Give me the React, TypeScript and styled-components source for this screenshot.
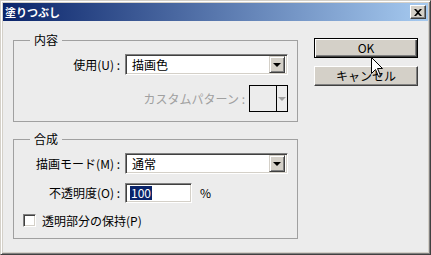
import styled, { createGlobalStyle } from "styled-components"

const Global = createGlobalStyle`
    html, body {
        margin: 0;
        padding: 0;
        background: #ececec;
    }
    body {
        font-family: "Noto Sans CJK JP", "Liberation Sans", sans-serif;
        font-size: 12px;
        color: #000;
    }
`

const Window = styled.div`
    position: relative;
    width: 431px;
    height: 255px;
    box-sizing: border-box;
    border: 1px solid;
    border-color: #d4d0c8 #404040 #404040 #d4d0c8;
    box-shadow: inset 1px 1px #fff, inset -1px -1px #808080;
    padding: 2px 2px 2px 2px;
    background: #d4d0c8;
    display: flex;
    flex-direction: column;
    overflow: hidden;
`

const TitleBar = styled.div`
    height: 18px;
    flex: none;
    display: flex;
    align-items: center;
    justify-content: space-between;
    padding: 0 2px 0 2px;
    background: linear-gradient(to right, #0a246a, #a6caf0);
`

const Title = styled.span`
    color: #fff;
    font-weight: bold;
    font-size: 11px;
    line-height: 14px;
`

const CloseButton = styled.div`
    width: 16px;
    height: 14px;
    box-sizing: border-box;
    background: #d4d0c8;
    border: 1px solid;
    border-color: #fff #404040 #404040 #fff;
    box-shadow: inset -1px -1px #808080;
    display: flex;
    align-items: center;
    justify-content: center;
`

const Body = styled.div`
    flex: 1;
    display: flex;
    align-items: flex-start;
    padding: 12px 10px 0 10px;
    background: #ececec;
`

const LeftColumn = styled.div`
    width: 285px;
    display: flex;
    flex-direction: column;
    gap: 10px;
`

const Group = styled.fieldset`
    margin: 0;
    padding: 7px 9px 9px 0;
    border: 1px solid #a0a0a0;
    min-inline-size: 0;
    display: flex;
    flex-direction: column;
    gap: ${(p: { $gap: number }) => p.$gap}px;
`

const Legend = styled.legend`
    margin-left: 16px;
    padding: 0 4px;
    line-height: 14px;
    font-size: 12px;
`

const Row = styled.div`
    display: flex;
    align-items: center;
`

const Label = styled.span`
    width: 106px;
    margin-right: 5px;
    text-align: right;
    white-space: nowrap;
    line-height: 14px;
`

const Select = styled.div`
    width: 163px;
    height: 21px;
    box-sizing: border-box;
    background: #fff;
    border: 1px solid;
    border-color: #808080 #fff #fff #808080;
    box-shadow: inset 1px 1px #404040, inset -1px -1px #d4d0c8;
    display: flex;
    align-items: center;
    padding: 2px 2px 2px 6px;
`

const SelectText = styled.span`
    flex: 1;
    line-height: 14px;
`

const ArrowButton = styled.div`
    width: 16px;
    height: 17px;
    box-sizing: border-box;
    background: #d4d0c8;
    border: 1px solid;
    border-color: #d4d0c8 #404040 #404040 #d4d0c8;
    box-shadow: inset 1px 1px #fff, inset -1px -1px #808080;
    display: flex;
    align-items: center;
    justify-content: center;
`

const Triangle = styled.div<{ $color?: string }>`
    width: 0;
    height: 0;
    border-left: 4px solid transparent;
    border-right: 4px solid transparent;
    border-top: 4px solid ${(p) => p.$color || "#000"};
`

const PatternRow = styled.div`
    display: flex;
    align-items: center;
    justify-content: flex-end;
`

const GreyLabel = styled.span`
    color: #a0a0a0;
    line-height: 14px;
    margin-right: 4px;
`

const PatternBox = styled.div`
    width: 39px;
    height: 27px;
    box-sizing: border-box;
    border: 1px solid #000;
    display: flex;
`

const PatternSwatch = styled.div`
    flex: 1;
    border-right: 1px solid #000;
`

const PatternArrow = styled.div`
    width: 10px;
    display: flex;
    align-items: center;
    justify-content: center;
`

const Input = styled.div`
    width: 67px;
    height: 20px;
    box-sizing: border-box;
    background: #fff;
    border: 1px solid;
    border-color: #808080 #fff #fff #808080;
    box-shadow: inset 1px 1px #404040, inset -1px -1px #d4d0c8;
    display: flex;
    align-items: center;
    padding: 0 4px;
`

const Selected = styled.span`
    background: #0a246a;
    color: #fff;
    line-height: 14px;
    padding: 0 1px;
`

const Unit = styled.span`
    margin-left: 8px;
    line-height: 14px;
`

const CheckRow = styled.label`
    display: flex;
    align-items: center;
    padding-left: 9px;
`

const CheckBox = styled.span`
    width: 13px;
    height: 13px;
    box-sizing: border-box;
    background: #fff;
    border: 1px solid;
    border-color: #808080 #fff #fff #808080;
    box-shadow: inset 1px 1px #404040, inset -1px -1px #d4d0c8;
    margin-right: 6px;
`

const RightColumn = styled.div`
    margin-left: 16px;
    padding-top: 5px;
    display: flex;
    flex-direction: column;
    gap: 8px;
`

const Button = styled.div<{ $default?: boolean }>`
    width: 104px;
    height: 20px;
    box-sizing: border-box;
    background: #d4d0c8;
    display: flex;
    align-items: center;
    justify-content: center;
    line-height: 14px;
    border: 1px solid;
    border-color: ${(p) => (p.$default ? "#000" : "#fff #404040 #404040 #fff")};
    box-shadow: ${(p) =>
        p.$default
            ? "inset 1px 1px #fff, inset -1px -1px #404040, inset -2px -2px #808080"
            : "inset -1px -1px #808080"};
`

const Cursor = styled.svg`
    position: absolute;
    left: 370px;
    top: 56px;
`

export default function App() {
    return (
        <>
            <Global />
            <Window>
                <TitleBar>
                    <Title>塗りつぶし</Title>
                    <CloseButton>
                        <svg width="8" height="7" viewBox="0 0 8 7">
                            <path d="M0 0h2l2 2 2-2h2L5 3.5 8 7H6L4 5 2 7H0l3-3.5z" fill="#000" />
                        </svg>
                    </CloseButton>
                </TitleBar>
                <Body>
                    <LeftColumn>
                        <Group $gap={10}>
                            <Legend>内容</Legend>
                            <Row>
                                <Label>使用(U) :</Label>
                                <Select>
                                    <SelectText>描画色</SelectText>
                                    <ArrowButton><Triangle /></ArrowButton>
                                </Select>
                            </Row>
                            <PatternRow>
                                <GreyLabel>カスタムパターン :</GreyLabel>
                                <PatternBox>
                                    <PatternSwatch />
                                    <PatternArrow><Triangle $color="#a0a0a0" /></PatternArrow>
                                </PatternBox>
                            </PatternRow>
                        </Group>
                        <Group $gap={9}>
                            <Legend>合成</Legend>
                            <Row>
                                <Label>描画モード(M) :</Label>
                                <Select>
                                    <SelectText>通常</SelectText>
                                    <ArrowButton><Triangle /></ArrowButton>
                                </Select>
                            </Row>
                            <Row>
                                <Label>不透明度(O) :</Label>
                                <Input><Selected>100</Selected></Input>
                                <Unit>%</Unit>
                            </Row>
                            <CheckRow>
                                <CheckBox />
                                <span>透明部分の保持(P)</span>
                            </CheckRow>
                        </Group>
                    </LeftColumn>
                    <RightColumn>
                        <Button $default>OK</Button>
                        <Button>キャンセル</Button>
                    </RightColumn>
                </Body>
                <Cursor width="13" height="21" viewBox="0 0 13 21">
                    <path d="M0.5 0.5V16.5L4.5 12.5L7.5 19.5L9.5 18.5L6.5 11.5H11.5Z" fill="#fff" stroke="#000" strokeWidth="1" />
                </Cursor>
            </Window>
        </>
    )
}
